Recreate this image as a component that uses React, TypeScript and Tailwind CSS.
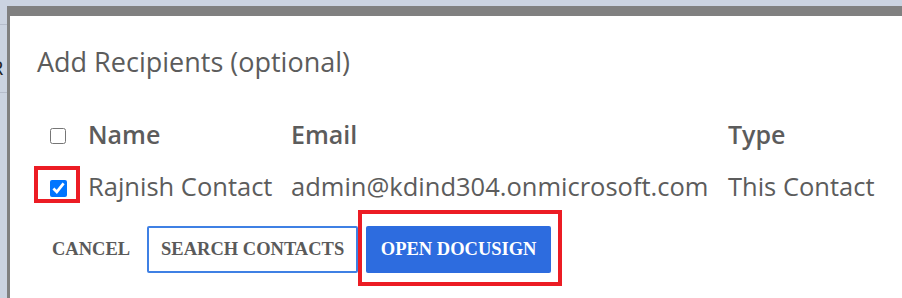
export default function App() {
  const btn = "h-[47px] font-['Liberation_Serif',serif] font-bold text-[18.5px] uppercase leading-none"

  return (
    <div className="w-[902px] h-[298px] bg-[#cbd3e1] pt-[6px] pl-[7px] overflow-hidden flex flex-col relative">
      {/* page behind the dialog peeks out on the left */}
      <span className="absolute left-[-9px] top-[56px] text-[20px] leading-[24px] text-[#222] font-['Open_Sans',sans-serif]">R</span>
      <span className="absolute left-0 top-[24px] w-[7px] h-px bg-[#b5bccb]" />
      <span className="absolute left-0 top-[92px] w-[7px] h-px bg-[#b5bccb]" />

      <div className="flex-1 border-t-[10px] border-l-[3px] border-[#808080] bg-white flex flex-col font-['Open_Sans',sans-serif] text-[#5c5c5c] relative">
        <h2 className="pl-[27px] pt-[28px] text-[27px] leading-[36px]">Add Recipients (optional)</h2>

        <div className="mt-[34px] pl-[40px] grid grid-cols-[38px_203px_437px_1fr] items-center">
          <div className="flex items-center pt-[4px]">
            <input type="checkbox" className="w-[16px] h-[16px] m-0" />
          </div>
          <div className="text-[25px] font-semibold leading-[40px]">Name</div>
          <div className="text-[25px] font-semibold leading-[40px]">Email</div>
          <div className="text-[25px] font-semibold leading-[40px]">Type</div>

          <div className="flex items-center relative mt-[12px] pt-[4px]">
            <input type="checkbox" defaultChecked className="w-[17px] h-[17px] m-0 accent-[#0075ff]" />
            <span className="absolute left-[-16px] top-[-10px] w-[46px] h-[37px] border-[4px] border-[#ec1c24]" />
          </div>
          <div className="text-[25.5px] leading-[40px] mt-[12px] whitespace-nowrap">Rajnish Contact</div>
          <div className="text-[25.5px] leading-[40px] mt-[12px] whitespace-nowrap">admin@kdind304.onmicrosoft.com</div>
          <div className="text-[25.5px] leading-[40px] mt-[12px] whitespace-nowrap">This Contact</div>
        </div>

        <div className="mt-[20px] pl-[28px] flex items-center">
          <button className={`${btn} px-[14px] text-[#5a5a5a]`}>Cancel</button>
          <button className={`${btn} ml-[3px] w-[211px] border-[2px] border-[#3f80e4] rounded-[2px] text-[#5a5a5a]`}>
            Search Contacts
          </button>
          <div className="relative ml-[8px] flex">
            <button className={`${btn} w-[185px] bg-[#2d6cdf] rounded-[2px] text-white`}>Open DocuSign</button>
            <span className="absolute left-[-8px] top-[-16px] w-[204px] h-[76px] border-[4px] border-[#ec1c24]" />
          </div>
        </div>
      </div>
    </div>
  )
}
